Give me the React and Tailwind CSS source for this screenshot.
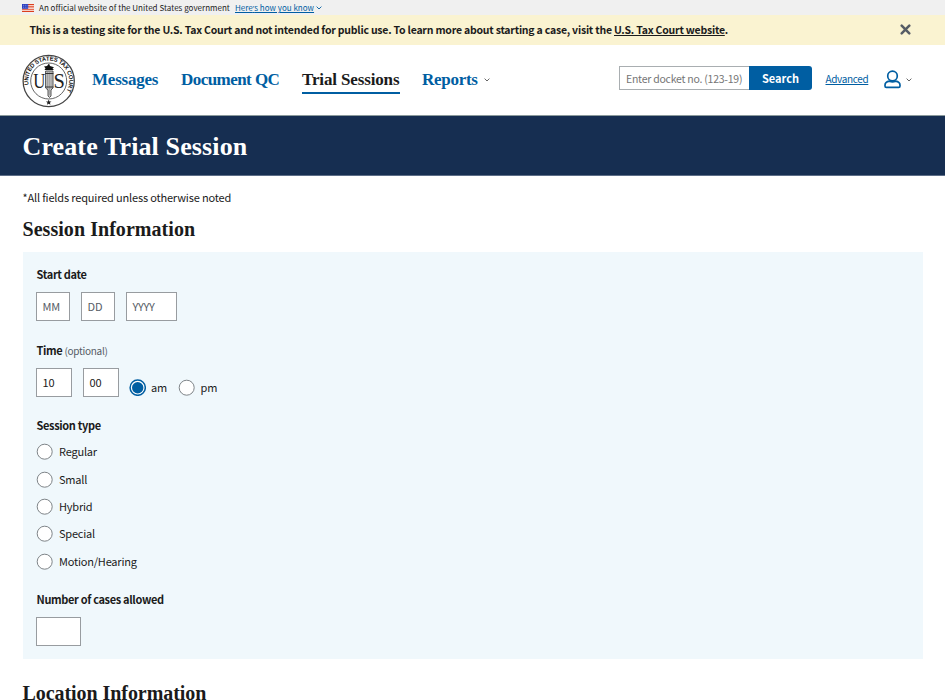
import React from "react";

const serif = "font-['Source_Serif_Pro','Liberation_Serif',serif] font-bold whitespace-nowrap";

function Seal() {
  return (
    <svg width="54" height="54" viewBox="0 0 54 54" className="shrink-0">
      <circle cx="26.7" cy="27" r="25.6" fill="#fff" stroke="#444" strokeWidth="1.3" />
      <circle cx="26.7" cy="27" r="18" fill="#fff" stroke="#666" strokeWidth="1" />
      <defs>
        <path id="sealArc" d="M 11.1 40.1 A 20.4 20.4 0 1 1 42.3 40.1" />
      </defs>
      <text fontFamily="Liberation Sans, sans-serif" fontWeight="700" fontSize="5.9" fill="#111">
        <textPath href="#sealArc" textLength="78" startOffset="10.3">UNITED STATES TAX COURT</textPath>
      </text>
      <g fontFamily="Liberation Serif, serif" fontSize="21" fill="#222">
        <text x="11.2" y="33.6" textLength="12" lengthAdjust="spacingAndGlyphs">U</text>
        <text x="31.5" y="33.6" textLength="11.2" lengthAdjust="spacingAndGlyphs">S</text>
      </g>
      <path d="M22 12.6 L25 12 L27 9.5 L28 12 L32 13.2 L30.5 14.5 L32 16 H22.5 L23.5 14.3 Z" fill="#111" />
      <path d="M23.6 17 H31 V34 L29 36 V42 L27.5 43.5 L26 42 V36 L23.6 34 Z" fill="#c8c8c8" stroke="#444" strokeWidth=".9" />
      <path d="M25.6 17 V35 M27.3 17 V41 M29.1 17 V35" stroke="#888" strokeWidth=".7" />
      <path d="M23.2 19.5 H31.4 M23.2 33 H31.4" stroke="#333" strokeWidth="1.2" />
      <path d="M26.7 45.5 L27.5 47.4 L29.5 47.5 L27.9 48.8 L28.5 50.8 L26.7 49.7 L24.9 50.8 L25.5 48.8 L23.9 47.5 L25.9 47.4 Z" fill="#222" />
    </svg>
  );
}

function Flag() {
  return (
    <svg width="12" height="8" viewBox="0 0 12 8" className="shrink-0">
      <rect width="12" height="8" fill="#fff" />
      <path d="M0 .6H12M0 2.9H12M0 5.2H12M0 7.4H12" stroke="#db3e1f" strokeWidth="1.15" />
      <rect width="6.2" height="4.8" fill="#2b3fc0" />
      <path d="M1 1.3H5.5M1 3.2H5.5" stroke="#b8bfef" strokeWidth=".6" strokeDasharray="1 .8" />
    </svg>
  );
}

function Chevron({ className = "", color = "#555" }) {
  return (
    <svg width="6" height="4" viewBox="0 0 6 4" className={"shrink-0 " + className}>
      <path d="M.6 .6 L3 3 L5.4 .6" fill="none" stroke={color} strokeWidth=".9" />
    </svg>
  );
}

function Radio({ checked = false }) {
  return (
    <svg width="17" height="17" viewBox="0 0 17 17" className="shrink-0">
      <circle cx="8.7" cy="8.7" r={checked ? 7.6 : 7.5} fill="#fff" stroke={checked ? "#005ea2" : "#71767a"} strokeWidth={checked ? 1.5 : 0.9} />
      {checked && <circle cx="8.7" cy="8.7" r="5.7" fill="#005ea2" />}
    </svg>
  );
}

function Box({ className = "", children }) {
  return (
    <div className={"flex items-center border border-[#989ca0] bg-white pl-[5.5px] " + className}>{children}</div>
  );
}

function Label({ className = "", children }) {
  return <div className={"h-[16px] pl-[0.5px] text-[11px] leading-[16px] font-bold tracking-[-0.34px] " + className}>{children}</div>;
}

const types = ["Regular", "Small", "Hybrid", "Special", "Motion/Hearing"];

export default function App() {
  return (
    <div className="h-[700px] w-[945px] overflow-hidden bg-white font-['Source_Sans_Pro','Noto_Sans_CJK_SC',sans-serif] text-[11px] tracking-[-0.17px] whitespace-nowrap text-[#1b1b1b]">
      <div className="flex h-[15px] items-center bg-[#f0f0f0] pl-[22px] text-[8px] leading-[15px] tracking-[0.02px]">
        <Flag />
        <span className="ml-[5px] w-[190px]">An official website of the United States government</span>
        <span className="ml-[6px] w-[80px] tracking-[0.02px] text-[#005ea2]">
          <span className="underline">Here<span className="font-['Open_Sans',sans-serif]">’</span>s how you know</span>
        </span>
        <Chevron className="ml-[1px]" color="#005ea2" />
      </div>
      <div className="flex h-[30px] items-center justify-between bg-[#faf3d1] pr-[34px] pl-[29.5px] font-bold">
        <span className="text-[10.5px] leading-[16px] tracking-[-0.22px]">
          This is a testing site for the U.S. Tax Court and not intended for public use. To learn more about starting a case, visit the{" "}
          <span className="underline">U.S. Tax Court website</span>.
        </span>
        <svg width="11" height="11" viewBox="0 0 11 11" className="mb-[2px]">
          <path d="M1.7 1.7 L9.3 9.3 M9.3 1.7 L1.7 9.3" stroke="#565c65" strokeWidth="2.5" strokeLinecap="round" />
        </svg>
      </div>
      <header className="flex h-[71px] items-start border-b border-[#8b9a9c] pl-[22px]">
        <div className="mt-[9px]">
          <Seal />
        </div>
        <nav className={serif + " mt-[22px] ml-[16px] flex h-[27px] text-[17px] leading-[25px] text-[#005ea2]"}>
          <span className="w-[89px] tracking-[-0.22px]">Messages</span>
          <span className="w-[121px] tracking-[-0.55px]">Document QC</span>
          <span className="h-[27px] w-[98px] border-b-2 border-[#005ea2] tracking-[-0.14px] text-[#1b1b1b]">Trial Sessions</span>
          <span className="ml-[22px] w-[62px] tracking-[-0.28px]">Reports</span>
          <Chevron className="mt-[11px]" />
        </nav>
        <div className="mt-[21px] ml-[129px] flex h-[24px] tracking-normal">
          <div className="flex w-[130px] items-center border border-r-0 border-[#a9aeb1] pt-[1px] pl-[6px] text-[10.5px] tracking-[-0.24px] text-[#757575]">Enter docket no. (123-19)</div>
          <div className="w-[63px] rounded-r-[3px] bg-[#005ea2] text-center leading-[24px] font-bold text-white">Search</div>
        </div>
        <span className="mt-[26px] ml-[13.5px] w-[58.5px] text-[10px] leading-[16px] tracking-[-0.35px] text-[#005ea2]">
          <span className="underline">Advanced</span>
        </span>
        <svg width="17" height="19" viewBox="0 0 17 19" className="mt-[25px]">
          <circle cx="8.5" cy="6" r="4.8" fill="none" stroke="#005ea2" strokeWidth="1.7" />
          <path d="M5.4 11.2 C2.3 11.7 1 13.3 1 15.3 V16 C1 16.9 1.5 17.4 2.3 17.4 H14.7 C15.5 17.4 16 16.9 16 16 V15.3 C16 13.3 14.7 11.7 11.6 11.2 C9.5 12 7.5 12 5.4 11.2 Z" fill="none" stroke="#005ea2" strokeWidth="1.7" />
        </svg>
        <Chevron className="mt-[33px] ml-[5px]" />
      </header>
      <div className="flex h-[60px] items-center border-b border-[#5c6d87] bg-[#162e51] pt-[2px] pl-[22.5px] text-white">
        <h1 className={serif + " text-[26px] tracking-[0.12px]"}>Create Trial Session</h1>
      </div>
      <main className="px-[22.5px]">
        <p className="mt-[14px] h-[16px] leading-[14px]">*All fields required unless otherwise noted</p>
        <h2 className={serif + " mt-[11px] h-[24px] text-[20px] leading-[25px] tracking-[0.05px]"}>Session Information</h2>
        <section className="mt-[11px] h-[407px] w-[900px] bg-[#f0f8fc] px-[13.5px] pt-[14px]">
          <Label>Start date</Label>
          <div className="mt-[10px] flex text-[#565c65]">
            <Box className="h-[29px] w-[34px]">MM</Box>
            <Box className="ml-[11px] h-[29px] w-[34px]">DD</Box>
            <Box className="ml-[11px] h-[29px] w-[51px] tracking-[-0.3px]">YYYY</Box>
          </div>
          <Label className="mt-[21px]">
            Time <span className="text-[10px] font-normal tracking-[-0.3px] text-[#565c65]">(optional)</span>
          </Label>
          <div className="mt-[10px] flex h-[29px]">
            <Box className="w-[36px]">10</Box>
            <Box className="ml-[11px] w-[36px]">00</Box>
            <div className="mt-[11px] ml-[9.5px] flex h-[17px] items-center">
              <Radio checked />
              <span className="ml-[5.5px] w-[27px]">am</span>
              <Radio />
              <span className="ml-[5.5px]">pm</span>
            </div>
          </div>
          <Label className="mt-[20px]">Session type</Label>
          <div className="mt-[5px]">
            {types.map((t) => (
              <div key={t} className="flex h-[27.35px] items-center tracking-[-0.2px]">
                <Radio />
                <span className="ml-[6px]">{t}</span>
              </div>
            ))}
          </div>
          <Label className="mt-[16px]">Number of cases allowed</Label>
          <Box className="mt-[10px] h-[29px] w-[45px]" />
        </section>
        <h2 className={serif + " mt-[22px] h-[24px] text-[20px] leading-[25px] tracking-[-0.06px]"}>Location Information</h2>
      </main>
    </div>
  );
}
